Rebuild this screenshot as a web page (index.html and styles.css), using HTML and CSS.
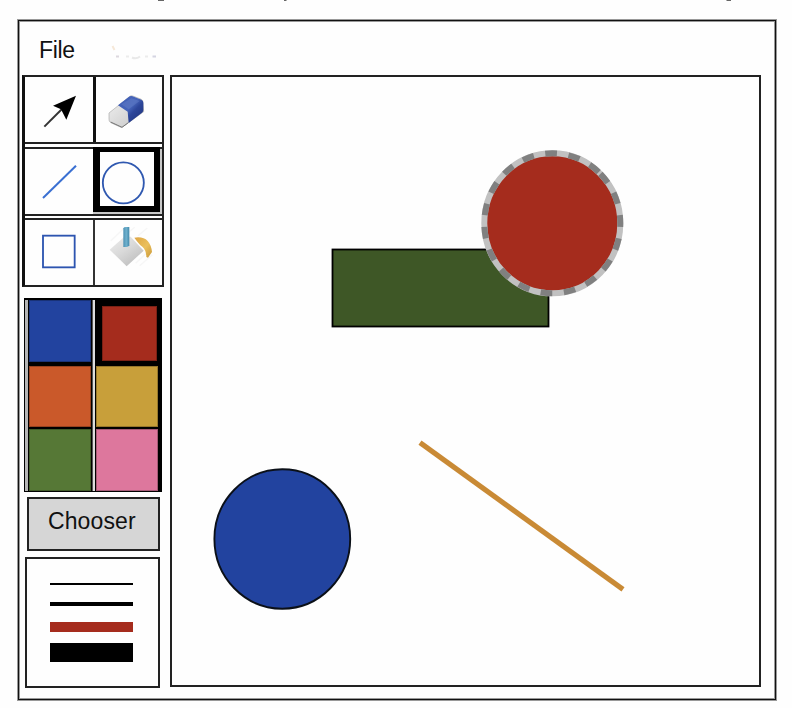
FILE: index.html
```html
<!DOCTYPE html>
<html lang="en">
<head>
<meta charset="utf-8">
<title>Paint</title>
<link rel="stylesheet" href="styles.css">
</head>
<body>
<svg class="page-marks" viewBox="0 0 792 20" aria-hidden="true">
  <path d="M158 0h6M284 0h2.500M726.500 0h4.500" stroke="#666" stroke-width="1.800"/>
</svg>
<main class="window">
  <nav class="menu">
    <span class="menu-item">File</span>
    <svg class="menu-faded" viewBox="110 40 50 22" aria-hidden="true">
      <g fill="none" stroke-width="2">
        <path d="M112.500 46l2 4" stroke="#f6e8d8"/>
        <path d="M116 56.500h3" stroke="#ddd8df"/>
        <path d="M126 56.500h3M145 56.500h3" stroke="#ececec"/>
        <path d="M132 57.500q4 2 8-1" stroke="#e9e9e9"/>
        <path d="M152.500 56.500h3.500" stroke="#d5d5e2"/>
      </g>
    </svg>
  </nav>
  <div class="workspace">
    <aside class="sidebar">
      <div class="tools">
        <div class="tool-row first">
          <div class="tool"><svg viewBox="33 21 204 195"><path d="M91 170L150 111" stroke="#333" stroke-width="6"/><path d="M186 77L117 107L141 118L157 149Z" fill="#000"/></svg></div>
          <div class="tool"><svg viewBox="246 21 198 195">
            <defs>
              <linearGradient id="blue" x1="0" y1="0" x2="1" y2="1"><stop offset="0" stop-color="#405fb5"/><stop offset=".45" stop-color="#4664ba"/><stop offset=".6" stop-color="#2d469a"/><stop offset="1" stop-color="#1c3078"/></linearGradient>
              <linearGradient id="rubber" x1="0" y1="0" x2="1" y2="1"><stop offset="0" stop-color="#f2f2f2"/><stop offset=".7" stop-color="#d2d2d2"/><stop offset="1" stop-color="#999"/></linearGradient>
            </defs>
            <path d="M285 129L349 78Q353 76 359 79L382 88Q388 91 387 98L389 125L327 170Q322 174 317 170L290 158Q284 154 285 147Z" fill="url(#rubber)" stroke="#aaa" stroke-width="2"/>
            <path d="M312 106L345 80Q350 76 356 79L382 89Q388 92 388 98L388 121Q388 125 384 128L344 159L341 125Z" fill="url(#blue)"/>
            <path d="M343 158L324 172L290 156" fill="none" stroke="#777" stroke-width="3"/>
            <path d="M322 103L352 85L377 93L344 118Z" fill="#6681c7" opacity=".45"/>
          </svg></div>
        </div>
        <div class="tool-row second">
          <div class="tool"><svg viewBox="33 27 204 195"><path d="M87 174L186 77" stroke="#3a70d2" stroke-width="6"/></svg></div>
          <div class="tool-slot"><div class="tool selected"><svg viewBox="258 36 162 162"><circle cx="328" cy="128.500" r="61.500" fill="none" stroke="#2f58b0" stroke-width="5.500"/></svg></div></div>
        </div>
        <div class="tool-row third">
          <div class="tool"><svg viewBox="33 240 204 195"><rect x="87" y="287" width="95" height="95" fill="none" stroke="#2d55b0" stroke-width="5.500"/></svg></div>
          <div class="tool"><svg viewBox="243 240 201 195">
            <defs>
              <linearGradient id="pail" x1="0" y1="0" x2=".8" y2="1"><stop offset="0" stop-color="#eee"/><stop offset=".5" stop-color="#d9d9d9"/><stop offset="1" stop-color="#bbb"/></linearGradient>
              <linearGradient id="handle"><stop offset="0" stop-color="#4c91b4"/><stop offset=".5" stop-color="#70b1cd"/><stop offset="1" stop-color="#438aac"/></linearGradient>
              <linearGradient id="pour" x1="0" y1="0" x2="1" y2="1"><stop offset="0" stop-color="#dda544"/><stop offset=".55" stop-color="#ebc05d"/><stop offset="1" stop-color="#c99838"/></linearGradient>
            </defs>
            <path d="M290 303L330 265M344 277L362 262M372 287L400 264M365 370L407 330M377 377L415 344" stroke="#f6f6f6" stroke-width="4"/>
            <path d="M287 329L331 290H350L389 332L338 379Z" fill="url(#pail)"/>
            <path d="M361 293Q388 289 401 303Q412 315 414 336L402 353L397 351Q397 331 385 320Q376 314 361 293Z" fill="url(#pour)"/>
            <path d="M328 265Q329 261 336 261H346V316Q345 320 338 321H328Z" fill="url(#handle)"/>
          </svg></div>
        </div>
      </div>
      <div class="palette">
        <div class="strip"></div>
        <div class="swatch blue"></div>
        <div class="strip light"></div>
        <div class="swatch red"></div>
        <div class="swatch orange"></div>
        <div class="swatch gold"></div>
        <div class="swatch green"></div>
        <div class="swatch pink"></div>
      </div>
      <div class="chooser">Chooser</div>
      <div class="strokes">
        <div class="stroke thin"></div>
        <div class="stroke medium"></div>
        <div class="stroke thick"></div>
        <div class="stroke heavy"></div>
      </div>
    </aside>
    <section class="canvas">
      <svg viewBox="172 77 587 608">
        <rect x="332.500" y="249.500" width="216" height="77" fill="#3e5726" stroke="#000" stroke-width="1.800"/>
        <ellipse cx="552.300" cy="223.300" rx="68" ry="70" fill="#a52c1d" stroke="#c1c1c1" stroke-width="6"/>
        <path d="M600.400 173.800A68 70 0 0 1 504.200 272.800A68 70 0 0 1 600.400 173.800" fill="none" stroke="#808080" stroke-width="6" stroke-dasharray="11.630 11.630"/>
        <ellipse cx="282.300" cy="539" rx="67.900" ry="69.700" fill="#22439f" stroke="#0b1018" stroke-width="1.900"/>
        <path d="M420 442.700L623 589.300" stroke="#c98a35" stroke-width="5.200"/>
      </svg>
    </section>
  </div>
</main>
</body>
</html>
```
FILE: styles.css
```css
* { box-sizing: border-box; }

body {
  margin: 0;
  height: 708px;
  overflow: hidden;
  background: #fefefe;
  color: #111;
  font: 23px/26px "Liberation Sans", Arial, sans-serif;
}

svg { display: block; }

.page-marks { width: 792px; height: 20px; }

.window {
  width: 758px;
  height: 680px;
  margin-left: 18px;
  border: 1px solid #111;
  box-shadow: 0 0 0 1px #999, inset 0 0 0 1px #999;
}

.menu {
  display: flex;
  height: 54px;
  padding: 16px 0 0 20px;
}

.menu-item { width: 71px; letter-spacing: -0.3px; }
.menu-faded { width: 50px; height: 22px; margin-top: 3px; }

.workspace { display: flex; padding-left: 3px; }

.sidebar { width: 148px; }

.tools {
  width: 142px;
  height: 212px;
  border: 2px solid #222;
  border-left: 3px solid #111;
}

.tool-row { display: grid; grid-template-columns: 68px 69px; }
.tool-row svg { width: 100%; height: 100%; }
.tool-row.first { height: 67px; border-bottom: 2px solid #222; }
.tool-row.second { height: 69px; margin-top: 3px; border: solid #222; border-width: 2px 0; }
.tool-row.third { height: 67px; margin-top: 2px; border-top: 2px solid #222; }
.first .tool + .tool { border-left: 3px solid #111; }
.third .tool + .tool { border-left: 2px solid #333; }

.tool { min-width: 0; height: 65px; }

.tool-slot { height: 65px; background: #c8c8c8; }

.tool.selected {
  width: 67px;
  height: 65px;
  margin-top: -2px;
  border: solid #000;
  border-width: 5px 6px 6px 7px;
  background: #fefefe;
}

.palette {
  display: grid;
  grid-template-columns: 3px 62px 3px 62px;
  grid-template-rows: 64px 63px 62px;
  column-gap: 1px;
  row-gap: 1px;
  width: 138px;
  height: 194px;
  margin: 11px 0 0 2px;
  border: solid #000;
  border-width: 2px 4px 1px 1px;
  background: #000;
}

.strip { grid-column: 1; grid-row: 1 / 4; background: #b5b5b5; }
.strip.light { grid-column: 3; background: #ddd; border-left: 1px solid #555; }

.swatch { box-shadow: inset 0 0 0 1px rgba(0, 0, 0, .25); }
.blue { grid-area: 1 / 2; height: 62px; background: #22439f; }
.red { grid-area: 1 / 4; width: 55px; height: 55px; margin: 6px 0 0 6px; background: #a52c1d; }
.orange { grid-area: 2 / 2; height: 61px; margin-top: 1px; background: #ca592a; }
.gold { grid-area: 2 / 4; height: 61px; margin-top: 1px; background: #c89f3a; }
.green { grid-area: 3 / 2; background: #567836; }
.pink { grid-area: 3 / 4; background: #dd779d; }

.chooser {
  width: 133px;
  height: 54px;
  margin: 5px 0 0 5px;
  padding: 9px 0 0 19px;
  border: 2px solid #222;
  background: #d6d6d6;
  letter-spacing: 0.1px;
}

.strokes {
  width: 135px;
  height: 131px;
  margin: 6px 0 0 3px;
  padding: 24px 0 0 23px;
  border: 2px solid #222;
}

.stroke { width: 83px; background: #000; }
.thin { height: 2px; }
.medium { height: 4px; margin-top: 17px; }
.thick { height: 10px; margin-top: 16px; background: #a52c1d; }
.heavy { height: 19px; margin-top: 11px; }

.canvas {
  width: 591px;
  height: 612px;
  border: 2px solid #222;
}

.canvas svg { width: 587px; height: 608px; }
```
